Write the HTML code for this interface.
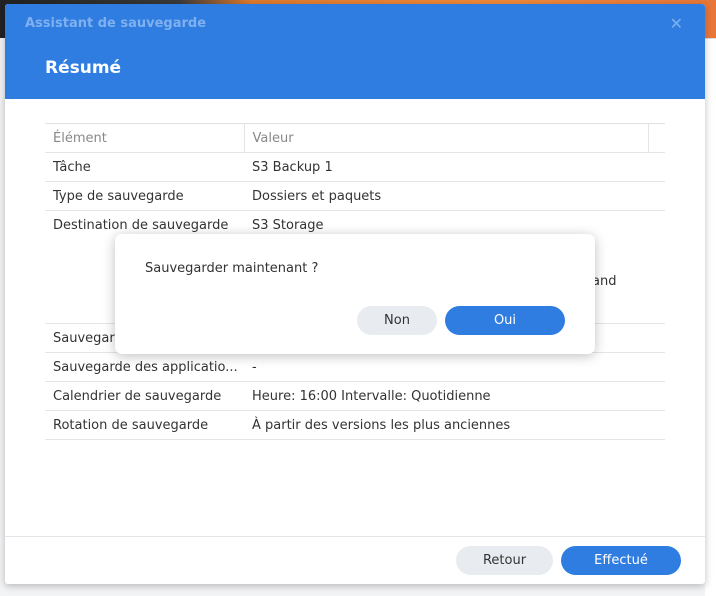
<!DOCTYPE html>
<html><head><meta charset="utf-8"><style>
*{margin:0;padding:0;box-sizing:border-box}
body{width:716px;height:596px;overflow:hidden;position:relative;background:#f3f4f6;font-family:"DejaVu Sans",sans-serif;font-size:13px;color:#333}
.top{position:absolute;left:0;top:0;width:716px;height:38px;background:linear-gradient(90deg,#222 0%,#3a3a3a 25%,#e07a2c 35%,#f08a3a 70%,#e8763a 100%)}
.rside{position:absolute;left:705px;top:38px;width:11px;height:558px;background:#fff;border-top:1px solid #ddd}
.win{position:absolute;left:5px;top:4px;width:700px;height:580px;background:#fff;box-shadow:0 2px 8px rgba(0,0,0,.25);border-radius:3px;overflow:hidden}
.hdr{height:95px;background:#2f7de1;position:relative}
.t1{position:absolute;left:20px;top:12px;color:#7fb0f0;font-size:13px;font-weight:bold}
.x{position:absolute;right:22px;top:10px;color:#7fb0f0;font-size:16px;font-weight:bold}
.t2{position:absolute;left:40px;top:54px;color:#fff;font-size:17px;font-weight:bold}
table{position:absolute;left:40px;top:119px;width:620px;border-collapse:collapse;table-layout:fixed}
td{height:29px;border-bottom:1px solid #e3e5e8;padding:0 8px;vertical-align:middle;font-size:13px;white-space:nowrap;overflow:hidden}
tr.h td{color:#888;border-top:1px solid #dfe1e4}
tr.h td+td{border-left:1px solid #e3e5e8}
.foot{position:absolute;left:0;top:532px;width:700px;border-top:1px solid #e3e5e8;height:48px}
.btn{position:absolute;height:29px;border-radius:15px;text-align:center;line-height:29px;font-size:13px}
.g{background:#e8ecf0;color:#333}.b{background:#2f7de1;color:#fff}
.dlg{position:absolute;left:115px;top:234px;width:480px;height:120px;background:#fff;border-radius:7px;box-shadow:0 2px 12px rgba(0,0,0,.25)}
</style></head><body>
<div class="top"></div><div class="rside"></div>
<div class="win">
<div class="hdr"><div class="t1">Assistant de sauvegarde</div><div class="x">✕</div><div class="t2">Résumé</div></div>
<table>
<tr class="h"><td style="width:199px">Élément</td><td style="width:404px">Valeur</td><td style="width:17px"></td></tr>
<tr><td>Tâche</td><td colspan="2">S3 Backup 1</td></tr>
<tr><td>Type de sauvegarde</td><td colspan="2">Dossiers et paquets</td></tr>
<tr><td style="vertical-align:top;padding-top:7px;height:113px">Destination de sauvegarde</td><td colspan="2" style="vertical-align:top;padding-top:7px;position:relative">S3 Storage<span style="position:absolute;left:348px;top:63px">and</span></td></tr>
<tr><td>Sauvegarde des dossiers</td><td colspan="2"></td></tr>
<tr><td>Sauvegarde des applicatio...</td><td colspan="2">-</td></tr>
<tr><td>Calendrier de sauvegarde</td><td colspan="2">Heure: 16:00 Intervalle: Quotidienne</td></tr>
<tr><td>Rotation de sauvegarde</td><td colspan="2">À partir des versions les plus anciennes</td></tr>
</table>
<div class="foot"><div class="btn g" style="left:451px;top:9px;width:97px">Retour</div><div class="btn b" style="left:556px;top:9px;width:120px">Effectué</div></div>
</div>
<div class="dlg"><div style="position:absolute;left:30px;top:27px">Sauvegarder maintenant ?</div>
<div class="btn g" style="left:242px;top:72px;width:80px">Non</div><div class="btn b" style="left:330px;top:72px;width:120px">Oui</div></div>
</body></html>
